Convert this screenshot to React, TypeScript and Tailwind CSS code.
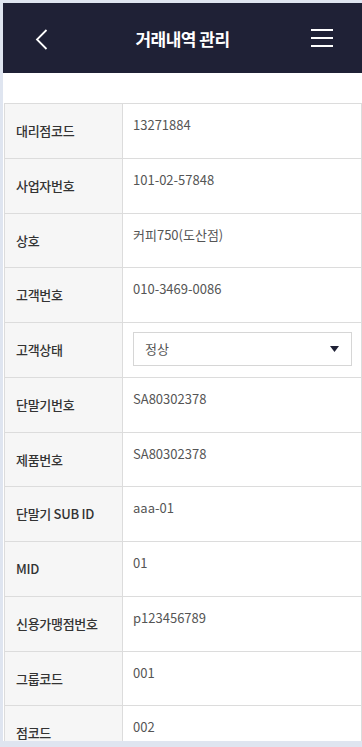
import React from "react";

const rows: { label: string; value?: string; select?: boolean }[] = [
  { label: "대리점코드", value: "13271884" },
  { label: "사업자번호", value: "101-02-57848" },
  { label: "상호", value: "커피750(도산점)" },
  { label: "고객번호", value: "010-3469-0086" },
  { label: "고객상태", select: true },
  { label: "단말기번호", value: "SA80302378" },
  { label: "제품번호", value: "SA80302378" },
  { label: "단말기 SUB ID", value: "aaa-01" },
  { label: "MID", value: "01" },
  { label: "신용가맹점번호", value: "p123456789" },
  { label: "그룹코드", value: "001" },
  { label: "점코드", value: "002" },
];

export default function App() {
  return (
    <div
      className="w-[362px] h-[747px] bg-[#dfe5f0] pl-[3px] pt-[3px] pb-[6px] flex flex-col overflow-hidden"
      style={{ fontFamily: '"Noto Sans CJK KR", "Noto Sans", sans-serif' }}
    >
      <div className="flex-1 bg-white flex flex-col overflow-hidden">
        <header className="h-[70px] shrink-0 bg-[#1f2136] relative flex items-center justify-center">
          <svg
            className="absolute left-[30px] top-[24px]"
            width="16"
            height="24"
            viewBox="0 0 16 24"
            fill="none"
          >
            <path d="M13.5 3 L4 12.5 L13.5 22" stroke="#ffffff" strokeWidth="1.8" />
          </svg>
          <h1 className="text-white text-[17px] font-bold tracking-[-0.5px] leading-none">거래내역 관리</h1>
          <div className="absolute left-[308px] top-[26px] flex flex-col gap-[6px]">
            <div className="w-[22px] h-[2px] bg-white" />
            <div className="w-[22px] h-[2px] bg-white" />
            <div className="w-[22px] h-[2px] bg-white" />
          </div>
        </header>
        <div className="pt-[30px] pl-[1px] flex-1 overflow-hidden">
          <div className="border-t border-l border-r border-[#dcdcdc]">
            {rows.map((r) => (
              <div key={r.label} className="flex h-[54.75px] border-b border-[#dcdcdc] shrink-0">
                <div className="w-[118px] shrink-0 bg-[#f6f6f6] border-r border-[#dcdcdc] flex items-center pl-[11px] text-[13px] font-medium text-[#333333] tracking-[-0.3px]">
                  {r.label}
                </div>
                <div className="flex-1 pl-[10px] pr-[9px]">
                  {r.select ? (
                    <div className="mt-[9px] h-[34px] border border-[#d6d6d6] flex items-center justify-between pl-[11px] pr-[12px] text-[13px] text-[#555555]">
                      <span>정상</span>
                      <svg width="9" height="6" viewBox="0 0 9 6">
                        <path d="M0 0 H9 L4.5 6 Z" fill="#1f2136" />
                      </svg>
                    </div>
                  ) : (
                    <div className="pt-[11px] text-[13px] leading-[20px] text-[#555555]">{r.value}</div>
                  )}
                </div>
              </div>
            ))}
          </div>
        </div>
      </div>
    </div>
  );
}
